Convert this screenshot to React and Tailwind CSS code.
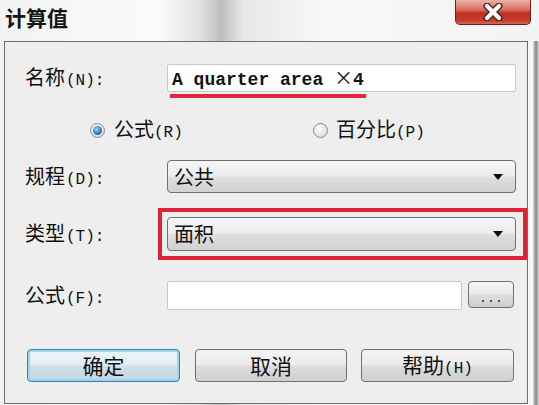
import React from "react";

const cjk = "font-['Noto_Sans_CJK_SC','Noto_Sans',sans-serif]";
const mono = "font-['Liberation_Mono','Noto_Sans_CJK_SC',monospace]";

function Label({ zh, key2 }) {
  return (
    <div className={`w-[142px] flex items-baseline text-[#111] ${cjk}`}>
      <span className="text-[20px] leading-none">{zh}</span>
      <span className={`${mono} text-[16px] leading-none ml-[1px]`}>({key2}):</span>
    </div>
  );
}

function Arrow() {
  return (
    <svg width="10" height="6" viewBox="0 0 10 6" className="absolute right-[12px] top-1/2 -translate-y-1/2">
      <path d="M0 0 H10 L5 6 Z" fill="#111" />
    </svg>
  );
}

function Select({ value }) {
  return (
    <div className="relative w-[349px] h-full rounded-[4px] border border-[#707070] bg-[linear-gradient(180deg,#f6f6f6_0%,#ececec_48%,#dedede_52%,#d2d2d2_100%)] flex items-center pl-[6px]">
      <span className={`${cjk} text-[20px] leading-none text-[#111]`}>{value}</span>
      <Arrow />
    </div>
  );
}

function Radio({ checked }) {
  return (
    <div className="w-[15px] h-[15px] rounded-full border border-[#8a8a8a] bg-[radial-gradient(circle_at_40%_35%,#ffffff_0%,#e0e0e0_70%,#c8c8c8_100%)] flex items-center justify-center">
      {checked && (
        <div className="w-[9px] h-[9px] rounded-full bg-[radial-gradient(circle_at_40%_35%,#9fd8ff_0%,#2a7cc0_55%,#0d3f73_100%)]" />
      )}
    </div>
  );
}

function Btn({ children, primary, w }) {
  return (
    <div
      className={`h-full rounded-[4px] border flex items-center justify-center ${w} ${
        primary
          ? "border-[#3c7fb1] shadow-[inset_0_0_0_2px_#9fd3f0] bg-[linear-gradient(180deg,#eaf4fa_0%,#e2eef6_48%,#cfe0ea_52%,#c4d6e2_100%)]"
          : "border-[#707070] bg-[linear-gradient(180deg,#f4f4f4_0%,#ebebeb_48%,#dddddd_52%,#cfcfcf_100%)]"
      }`}
    >
      {children}
    </div>
  );
}

export default function App() {
  return (
    <div className="w-[539px] h-[405px] overflow-hidden flex flex-col bg-[linear-gradient(90deg,#f3f3f3_0%,#fafafa_30%,#e2e2e2_37%,#bdbdbd_41%,#e8e8e8_45%,#f7f7f7_60%,#f4f4f4_100%)]">
      {/* title bar */}
      <div className="h-[41px] flex items-start justify-between shrink-0">
        <span className={`ml-[5px] mt-[4px] text-[21px] font-bold leading-[26px] text-[#151515] ${cjk}`}>
          计算值
        </span>
        <div className="mr-[8px] w-[76px] h-[25px] rounded-b-[5px] border border-t-0 border-[#6e2018] bg-[linear-gradient(180deg,#eab3a6_0%,#d9705f_40%,#c22f22_55%,#c53a2c_85%,#d66a58_100%)] flex items-center justify-center">
          <svg width="24" height="18" viewBox="0 0 24 18">
            <path d="M6 3 L18 15 M18 3 L6 15" stroke="#4a2a26" strokeWidth="7" strokeLinecap="round" />
            <path d="M6 3 L18 15 M18 3 L6 15" stroke="#ffffff" strokeWidth="4.2" strokeLinecap="round" />
          </svg>
        </div>
      </div>

      {/* body */}
      <div className="flex flex-1">
        <div className="ml-[4px] w-[524px] h-[363px] border border-[#6c6c6c] bg-[#eeeeee] flex flex-col pl-[20px] pr-[11px]">
          {/* name */}
          <div className="mt-[22px] h-[28px] flex items-center">
            <Label zh="名称" key2="N" />
            <div className="relative w-[349px] h-full border border-[#c9c9c9] rounded-[2px] bg-white flex items-center pl-[4px]">
              <span className={`${mono} font-bold text-[18px] leading-none text-[#111]`}>
                A quarter area <span className={`${cjk} font-normal text-[19px]`}>×</span>4
              </span>
              <div className="absolute left-[2px] top-[29px] w-[196px] h-[4px] bg-[#e0283a]" />
            </div>
          </div>

          {/* radios */}
          <div className="mt-[24px] h-[28px] flex items-center">
            <div className="ml-[65px] w-[223px] flex items-center gap-[9px]">
              <Radio checked />
              <span className={`${cjk} text-[20px] leading-none text-[#111]`}>
                公式<span className={`${mono} text-[16px]`}>(R)</span>
              </span>
            </div>
            <div className="flex items-center gap-[8px]">
              <Radio />
              <span className={`${cjk} text-[20px] leading-none text-[#111]`}>
                百分比<span className={`${mono} text-[16px]`}>(P)</span>
              </span>
            </div>
          </div>

          {/* discipline */}
          <div className="mt-[16px] h-[33px] flex items-center">
            <Label zh="规程" key2="D" />
            <Select value="公共" />
          </div>

          {/* type */}
          <div className="mt-[24px] h-[34px] flex items-center">
            <Label zh="类型" key2="T" />
            <div className="relative h-full">
              <div className="absolute -left-[9px] -top-[9px] -right-[11px] -bottom-[9px] border-4 border-[#dc2434]" />
              <Select value="面积" />
            </div>
          </div>

          {/* formula */}
          <div className="mt-[30px] h-[29px] flex items-center">
            <Label zh="公式" key2="F" />
            <div className="w-[295px] h-full border border-[#c9c9c9] rounded-[2px] bg-white" />
            <div className="ml-[6px] w-[46px] h-[27px] self-start rounded-[4px] border border-[#707070] bg-[linear-gradient(180deg,#f4f4f4_0%,#ebebeb_48%,#dddddd_52%,#cfcfcf_100%)] flex items-end justify-center pb-[5px] gap-[6px]">
              <div className="w-[2px] h-[2px] bg-[#555]" />
              <div className="w-[2px] h-[2px] bg-[#555]" />
              <div className="w-[2px] h-[2px] bg-[#555]" />
            </div>
          </div>

          {/* buttons */}
          <div className="mt-[39px] h-[33px] flex items-center ml-[2px]">
            <Btn primary w="w-[153px]">
              <span className={`${cjk} text-[21px] leading-none text-[#111]`}>确定</span>
            </Btn>
            <div className="ml-[15px] h-[33px] flex">
              <Btn w="w-[152px]">
                <span className={`${cjk} text-[21px] leading-none text-[#111]`}>取消</span>
              </Btn>
            </div>
            <div className="ml-[14px] h-[33px] flex">
              <Btn w="w-[153px]">
                <span className={`${cjk} text-[21px] leading-none text-[#111]`}>
                  帮助<span className={`${mono} text-[16px]`}>(H)</span>
                </span>
              </Btn>
            </div>
          </div>
        </div>
        {/* right glass frame */}
        <div className="flex-1 bg-[linear-gradient(90deg,#f4f4f4_0%,#f8f8f8_40%,#a8a8a8_60%,#8a8a8a_75%,#dcdcdc_100%)]" />
      </div>
    </div>
  );
}
